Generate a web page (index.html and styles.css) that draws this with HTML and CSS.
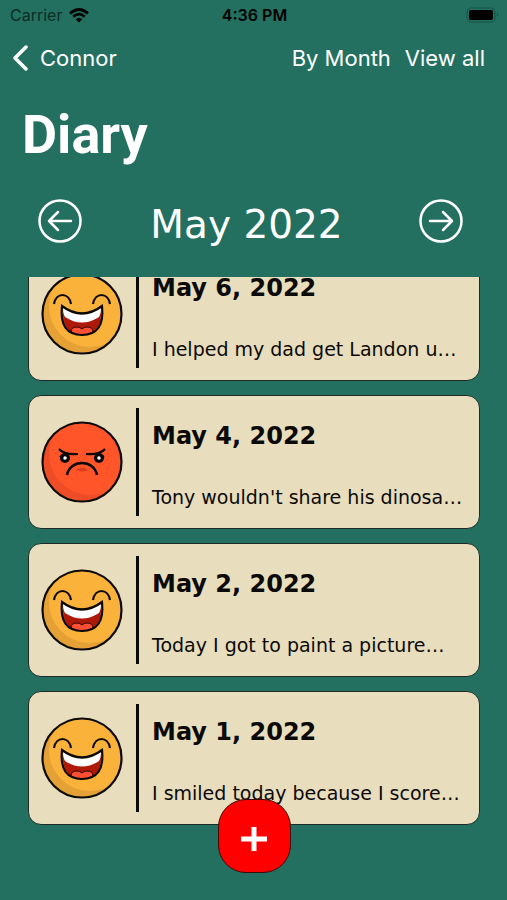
FILE: index.html
```html
<!DOCTYPE html>
<html lang="en">
<head>
<meta charset="utf-8">
<meta name="viewport" content="width=device-width, initial-scale=1">
<title>Diary</title>
<link rel="stylesheet" href="styles.css">
</head>
<body>
<svg class="defs" aria-hidden="true">
  <clipPath id="head"><circle cx="42" cy="42" r="39"/></clipPath>
  <symbol id="happy" viewBox="0 0 84 84">
    <circle cx="42" cy="42" r="39" fill="#e6a136"/>
    <circle cx="50" cy="34" r="41" fill="#fab23b" clip-path="url(#head)"/>
    <circle cx="42" cy="42" r="39.500" fill="none" stroke="#0c0a08" stroke-width="2.200"/>
    <path d="M14 32C16 20 29 20 31 32M53 32C55 20 68 20 70 32" fill="none" stroke="#0c0a08" stroke-width="2.200"/>
    <path d="M23 36Q42 50 61 36Q63 63 42 63Q21 63 23 36Z" fill="#b01808"/>
    <path d="M23 36Q42 48 61 36Q61 42 59 45Q42 56 25 45Q23 42 23 36Z" fill="#fff"/>
    <path d="M31 60Q31 55 37 55Q40 55 42 57Q44 55 47 55Q53 55 53 60Q42 66 31 60Z" fill="#ff5035" stroke="#250604" stroke-width="1"/>
    <path d="M22 34Q42 49 62 34Q65 63 42 63Q19 63 22 34Z" fill="none" stroke="#0c0a08" stroke-width="2.200"/>
  </symbol>
  <symbol id="angry" viewBox="0 0 84 84">
    <circle cx="42" cy="42" r="39" fill="#ed4c27"/>
    <circle cx="50" cy="34" r="41" fill="#ff5529" clip-path="url(#head)"/>
    <circle cx="42" cy="42" r="39.500" fill="none" stroke="#0c0a08" stroke-width="2.200"/>
    <circle cx="25" cy="38" r="5" fill="#0c0a08"/>
    <circle cx="59" cy="38" r="5" fill="#0c0a08"/>
    <circle cx="25" cy="38" r="1.800" fill="#fff"/>
    <circle cx="59" cy="38" r="1.800" fill="#fff"/>
    <path d="M19 29Q24 35 38 34M65 29Q60 35 46 34M20 36L23 38M64 36L61 38" fill="none" stroke="#0c0a08" stroke-width="2.200"/>
    <path d="M36 50Q42 45 48 50Q42 53 36 50Z" fill="#df3e1d"/>
    <path d="M27 55C30 39 54 39 57 55" fill="none" stroke="#0c0a08" stroke-width="2.500"/>
  </symbol>
</svg>
<div class="screen">
  <div class="status">
    <div class="carrier">
      <span>Carrier</span>
      <svg width="20" height="15" viewBox="0 0 20 15" aria-hidden="true">
        <path d="M1 5.500Q10-2.500 19 5.500M4.200 8.700Q10 3.700 15.800 8.700" fill="none" stroke="#000" stroke-width="2.700"/>
        <path d="M6.700 11.200Q10 8.200 13.300 11.200L10 14.500Z"/>
      </svg>
    </div>
    <time>4:36 PM</time>
    <div class="battery">
      <svg width="33" height="16" viewBox="0 0 33 16" role="img" aria-label="Battery full">
        <rect x="1" y="1" width="28" height="14" rx="4" fill="none" stroke="#195246"/>
        <rect x="3" y="3" width="24" height="10" rx="2"/>
        <path d="M31 6Q33 8 31 10Z" fill="#195246"/>
      </svg>
    </div>
  </div>
  <nav class="nav">
    <a class="back" href="#">
      <svg width="17" height="26" viewBox="0 0 17 26" aria-hidden="true"><path d="M14 2L3 13L14 24" fill="none" stroke="#fff" stroke-width="3.500" stroke-linecap="round" stroke-linejoin="round"/></svg>
      Connor
    </a>
    <div class="views"><a href="#">By Month</a><a href="#">View all</a></div>
  </nav>
  <h1>Diary</h1>
  <div class="month">
    <button type="button" aria-label="Previous month">
      <svg width="44" height="44" viewBox="0 0 44 44"><g fill="none" stroke="#fff" stroke-width="2.500"><circle cx="22" cy="22" r="20.500"/><path d="M33 22H11M20 13L11 22L20 31" stroke-linecap="round" stroke-linejoin="round"/></g></svg>
    </button>
    <h2>May 2022</h2>
    <button type="button" aria-label="Next month">
      <svg width="44" height="44" viewBox="0 0 44 44"><g fill="none" stroke="#fff" stroke-width="2.500"><circle cx="22" cy="22" r="20.500"/><path d="M11 22H33M24 13L33 22L24 31" stroke-linecap="round" stroke-linejoin="round"/></g></svg>
    </button>
  </div>
  <main class="list">
    <article class="card">
      <svg class="face" role="img" aria-label="Happy"><use href="#happy"/></svg>
      <div class="entry"><h3>May 6, 2022</h3><p>I helped my dad get Landon u…</p></div>
    </article>
    <article class="card">
      <svg class="face" role="img" aria-label="Angry"><use href="#angry"/></svg>
      <div class="entry"><h3>May 4, 2022</h3><p>Tony wouldn't share his dinosa…</p></div>
    </article>
    <article class="card">
      <svg class="face" role="img" aria-label="Happy"><use href="#happy"/></svg>
      <div class="entry"><h3>May 2, 2022</h3><p>Today I got to paint a picture…</p></div>
    </article>
    <article class="card">
      <svg class="face" role="img" aria-label="Happy"><use href="#happy"/></svg>
      <div class="entry"><h3>May 1, 2022</h3><p>I smiled today because I score…</p></div>
    </article>
  </main>
  <button class="add" type="button" aria-label="Add entry">
    <svg width="28" height="28" viewBox="0 0 28 28"><path d="M14 2V26M1 14H27" stroke="#fff" stroke-width="5"/></svg>
  </button>
</div>
</body>
</html>
```
FILE: styles.css
```css
* { box-sizing: border-box; }
body { margin: 0; background: #237060; }
h1, h2, h3, p { margin: 0; }
button { padding: 0; border: 0; background: none; cursor: pointer; }
svg { display: block; }
a { color: inherit; text-decoration: none; }

.defs { position: absolute; width: 0; height: 0; }

.screen {
  height: 100vh;
  display: flex;
  flex-direction: column;
  color: #fff;
  font-family: Inter, "Liberation Sans", sans-serif;
}

.status {
  display: grid;
  grid-template-columns: 1fr auto 1fr;
  align-items: center;
  height: 30px;
  padding: 0 8px 0 10px;
  color: #000;
  font-size: 16px;
}
.carrier { display: flex; align-items: center; gap: 7px; color: #0b2d26; }
.status time { font-weight: 600; }
.battery { justify-self: end; }

.nav {
  display: flex;
  justify-content: space-between;
  align-items: center;
  height: 56px;
  padding: 0 22px 0 12px;
  font-size: 22px;
}
.back { display: flex; align-items: center; gap: 11px; }
.views { display: flex; gap: 14px; }

h1 {
  padding: 0 22px;
  font: bold 54px/98px Roboto, "Liberation Sans", sans-serif;
}

.month {
  display: flex;
  align-items: center;
  justify-content: space-between;
  height: 93px;
  padding: 0 44px 20px 38px;
}
.month h2 {
  padding: 8px 8px 0 0;
  font: 39px/48px "DejaVu Sans", sans-serif;
}

.list {
  flex: 1;
  min-height: 0;
  overflow: hidden;
  padding: 0 27px 0 28px;
}
.card {
  display: flex;
  align-items: center;
  height: 134px;
  margin-bottom: 14px;
  padding: 0 8px 0 11px;
  border: 1px solid #1c2c25;
  border-radius: 13px;
  background: #e8ddbd;
  color: #0c0a08;
}
/* The list is scrolled so that its first card is partly hidden. */
.card:first-child { margin-top: -30px; }
.face { flex: none; width: 84px; height: 84px; }
.entry {
  flex: 1;
  min-width: 0;
  height: 108px;
  margin-left: 12px;
  padding: 12px 0 0 13px;
  border-left: 3px solid #0c0a08;
  font-family: "DejaVu Sans", sans-serif;
}
.entry h3 { font-size: 24px; line-height: 32px; }
.entry p { margin-top: 32px; font-size: 19px; line-height: 26px; white-space: nowrap; }

.add {
  position: fixed;
  bottom: 27px;
  left: calc(50% - 36px);
  width: 73px;
  height: 74px;
  display: grid;
  place-items: center;
  padding-top: 6px;
  border: 1px solid #3a0b08;
  border-radius: 28px;
  background: #f00;
}
```
